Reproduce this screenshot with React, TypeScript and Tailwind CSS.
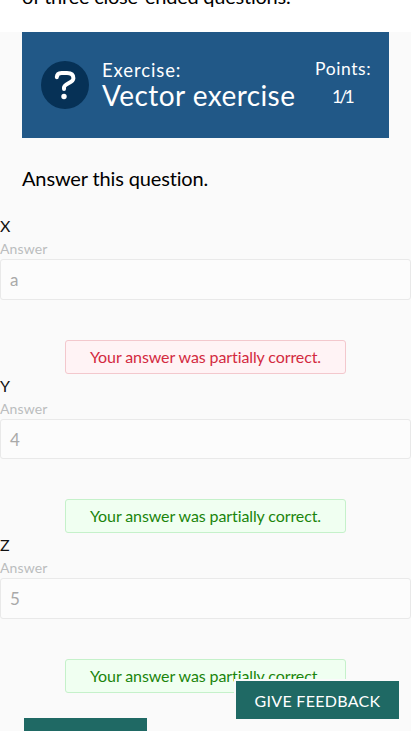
type Field = { label: string; value: string; tone: 'red' | 'green' };

const fields: Field[] = [
  { label: 'X', value: 'a', tone: 'red' },
  { label: 'Y', value: '4', tone: 'green' },
  { label: 'Z', value: '5', tone: 'green' },
];

const tones = {
  red: 'border-[#f3c8cd] bg-[#fff3f5] text-[#d32a3f]',
  green: 'border-[#c5f1ca] bg-[#f0fff1] text-[#1b850c]',
};

function ExerciseHeader() {
  return (
    <header className="mx-[22px] flex h-[106px] items-center bg-[#215887] pl-[19px] text-white">
      <svg className="size-12 shrink-0" viewBox="0 0 48 48" fill="none">
        <circle cx="24" cy="24" r="24" fill="#063156" />
        <path
          d="M15.8 16.2C16 13.1 17.5 12 20.5 12H26C30.4 12 32.4 14.3 32.4 17.2C32.4 22.2 23 22.2 23 26.5V28"
          stroke="white"
          strokeWidth="4"
          strokeLinecap="round"
          strokeLinejoin="round"
        />
        <circle cx="23" cy="35.5" r="2.7" fill="white" />
      </svg>
      <div className="mb-1 ml-[13px] w-[213px] shrink-0 whitespace-nowrap">
        <p className="text-[18.5px] leading-[24px] tracking-[0.9px]">Exercise:</p>
        <h1 className="text-[28px] leading-[26px] tracking-[0.43px]">Vector exercise</h1>
      </div>
      <div className="mb-1 w-[56px] text-center text-[17.5px] leading-7">
        <p className="tracking-[0.6px]">Points:</p>
        <p className="-ml-0.5 tracking-[-2.8px]">1/1</p>
      </div>
    </header>
  );
}

function AnswerField({ label, value, tone }: Field) {
  return (
    <div className="flex h-[159.5px] flex-col">
      <p className="h-[25px] text-base leading-6 text-[#111]">{label}</p>
      <label className="h-5 text-sm leading-5 tracking-[0.15px] text-[#bbbdbe]">Answer</label>
      <div className="h-[40.5px] shrink-0 rounded-[3px] border border-[#e9e9e9] bg-[#fcfcfc] pl-[9px] text-[17px] leading-[40px] text-[#a9a9a9]">
        {value}
      </div>
      <div
        className={`mx-auto mt-10 h-[34px] w-[281px] shrink-0 rounded-[3px] border text-center text-base leading-[32px] tracking-[-0.1px] ${tones[tone]}`}
      >
        Your answer was partially correct.
      </div>
    </div>
  );
}

export default function App() {
  return (
    <div className="relative h-[731px] overflow-hidden bg-[#fafafa] font-['Lato',sans-serif]">
      <div className="flex h-8 items-end bg-white pb-5 pl-[22px] text-[20px] leading-8 tracking-[-0.24px] text-black">
        <p>of three close-ended questions.</p>
      </div>
      <ExerciseHeader />
      <p className="ml-[22px] pt-6 text-[20px] leading-8 tracking-[-0.14px] text-black">Answer this question.</p>
      <div className="mt-5">
        {fields.map((field) => (
          <AnswerField key={field.label} {...field} />
        ))}
      </div>
      <div className="mt-[25px] ml-6 h-10 w-[123px] bg-[#1f6964]" />
      <button className="absolute right-[10px] bottom-[10px] h-[42px] w-[167px] border-2 border-[#fafafa] bg-[#1f6964] pt-px text-base leading-[38px] tracking-[0.3px] text-white">
        GIVE FEEDBACK
      </button>
    </div>
  );
}
